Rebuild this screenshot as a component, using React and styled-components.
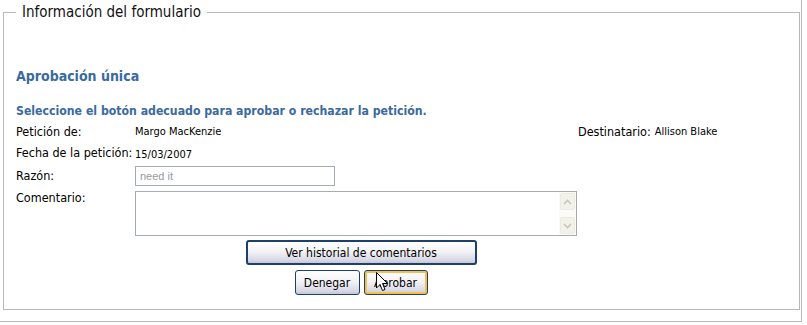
import React from 'react';
import styled, { createGlobalStyle } from 'styled-components';

const GlobalStyle = createGlobalStyle`
  html, body {
    margin: 0;
    padding: 0;
    background: #ffffff;
  }
  body {
    font-family: 'DejaVu Sans Condensed', 'DejaVu Sans', sans-serif;
    color: #000;
  }
`;

const Page = styled.div`
  width: 802px;
  height: 322px;
  border-right: 1px solid #b8b8b0;
  border-bottom: 1px solid #b8b8b0;
  padding: 3px 0 0 3px;
  box-sizing: border-box;
`;

const Fieldset = styled.fieldset`
  margin: 0;
  width: 797px;
  height: 307px;
  box-sizing: border-box;
  border: 1px solid #b8b8b8;
  padding: 0 12px 0 12px;
  min-width: 0;
`;

const Legend = styled.legend`
  font-size: 15px;
  line-height: 18px;
  padding: 0 6px;
  color: #111;
`;

const Heading = styled.h2`
  margin: 46px 0 0 0;
  font-size: 14px;
  line-height: 18px;
  font-weight: bold;
  color: #3a6a9f;
`;

const Instruction = styled.p`
  margin: 17px 0 0 0;
  font-size: 12.2px;
  line-height: 18px;
  font-weight: bold;
  color: #3a6a9f;
`;

const Row = styled.div`
  display: grid;
  grid-template-columns: 115px 439px max-content auto;
  column-gap: 4px;
  align-items: ${p => (p.$top ? 'start' : 'center')};
  height: ${p => p.$h}px;
  margin-top: ${p => p.$mt || 0}px;
`;

const Label = styled.span`
  font-size: 12.5px;
  line-height: 16px;
  white-space: nowrap;
`;

const Value = styled.span`
  font-size: 11px;
  line-height: 14px;
  padding-top: ${p => p.$drop || 0}px;
`;

const TextInput = styled.input`
  width: 200px;
  height: 20px;
  box-sizing: border-box;
  border: 1px solid #a5acb2;
  padding: 0 4px;
  font-family: 'Liberation Sans', Arial, sans-serif;
  font-size: 11px;
  color: #9a9a9a;
  background: #fff;
  outline: none;
`;

const AreaBox = styled.div`
  display: flex;
  width: 442px;
  height: 45px;
  margin-top: 1px;
  box-sizing: border-box;
  border: 1px solid #a5acb2;
  background: #fff;
`;

const Area = styled.textarea`
  flex: 1;
  border: none;
  resize: none;
  outline: none;
  padding: 2px;
  overflow: hidden;
  font-family: 'Liberation Sans', Arial, sans-serif;
  font-size: 11px;
`;

const ScrollBar = styled.div`
  width: 17px;
  display: flex;
  flex-direction: column;
  justify-content: space-between;
  background: #fbfbf8;
`;

const ScrollBtn = styled.div`
  height: 15px;
  margin: 1px;
  border: 1px solid #ecebe3;
  border-radius: 2px;
  background: #f2f1ea;
  display: flex;
  align-items: center;
  justify-content: center;
`;

const Actions = styled.div`
  margin: 4px 0 0 119px;
  width: 452px;
  display: flex;
  flex-direction: column;
  align-items: center;
  gap: 5px;
`;

const ButtonRow = styled.div`
  display: flex;
  gap: 4px;
`;

const Button = styled.button`
  position: relative;
  height: 25px;
  width: ${p => p.$w}px;
  box-sizing: border-box;
  border: ${p => (p.$wide ? '2px' : '1px')} solid #1c3f6e;
  border-radius: 3px;
  padding: 0;
  background: linear-gradient(#ffffff 0%, #f3f3f6 45%, #d9d9e6 85%, #c6c6d8 100%);
  font-family: 'DejaVu Sans Condensed', 'DejaVu Sans', sans-serif;
  font-size: 12px;
  color: #000;
  box-shadow: ${p => (p.$hover ? 'inset 0 0 0 2px #f7c04a' : 'none')};
`;

const Cursor = styled.svg`
  position: absolute;
  left: 11px;
  top: 1px;
  pointer-events: none;
`;

function Chevron({ down }) {
  return (
    <svg width="9" height="6" viewBox="0 0 9 6">
      <path
        d={down ? 'M1 1 L4.5 4.5 L8 1' : 'M1 5 L4.5 1.5 L8 5'}
        fill="none"
        stroke="#c8c7bc"
        strokeWidth="1.6"
      />
    </svg>
  );
}

export default function App() {
  return (
    <>
      <GlobalStyle />
      <Page>
        <Fieldset>
          <Legend>Información del formulario</Legend>
          <Heading>Aprobación única</Heading>
          <Instruction>Seleccione el botón adecuado para aprobar o rechazar la petición.</Instruction>

          <Row $h={20} $mt={2}>
            <Label>Petición de:</Label>
            <Value>Margo MacKenzie</Value>
            <Label>Destinatario:</Label>
            <Value>Allison Blake</Value>
          </Row>
          <Row $h={22}>
            <Label>Fecha de la petición:</Label>
            <Value $drop={3}>15/03/2007</Value>
          </Row>
          <Row $h={24}>
            <Label>Razón:</Label>
            <TextInput defaultValue="need it" />
          </Row>
          <Row $h={46} $mt={2} $top>
            <Label>Comentario:</Label>
            <AreaBox>
              <Area />
              <ScrollBar>
                <ScrollBtn><Chevron /></ScrollBtn>
                <ScrollBtn><Chevron down /></ScrollBtn>
              </ScrollBar>
            </AreaBox>
          </Row>

          <Actions>
            <Button $w={231} $wide>Ver historial de comentarios</Button>
            <ButtonRow>
              <Button $w={65}>Denegar</Button>
              <Button $w={64} $hover>
                Aprobar
                <Cursor width="13" height="20" viewBox="0 0 13 20">
                  <path
                    d="M0.5 0.5 L0.5 16 L4 12.5 L6.5 18.5 L9 17.5 L6.5 11.5 L11.5 11.5 Z"
                    fill="#fff"
                    stroke="#000"
                    strokeWidth="1"
                  />
                </Cursor>
              </Button>
            </ButtonRow>
          </Actions>
        </Fieldset>
      </Page>
    </>
  );
}
